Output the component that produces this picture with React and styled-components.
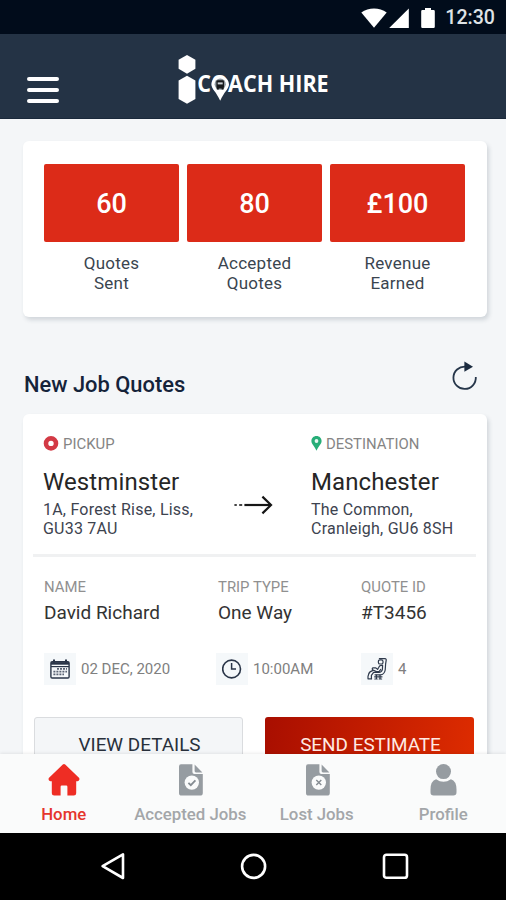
import React from "react";
import styled, { createGlobalStyle } from "styled-components";

const stats = [
  { value: "60", label: ["Quotes", "Sent"] },
  { value: "80", label: ["Accepted", "Quotes"] },
  { value: "£100", label: ["Revenue", "Earned"] },
];

export default function App() {
  return (
    <Screen>
      <GlobalStyle />
      <StatusBar>
        <WifiIcon />
        <SignalIcon />
        <BatteryIcon />
        <Time>12:30</Time>
      </StatusBar>

      <Header>
        <MenuButton aria-label="Menu">
          <MenuLine />
          <MenuLine />
          <MenuLine />
        </MenuButton>
        <Logo />
      </Header>

      <Content>
        <StatsCard>
          {stats.map((stat) => (
            <Stat key={stat.value}>
              <StatTile>{stat.value}</StatTile>
              <StatLabel>
                {stat.label[0]}
                <br />
                {stat.label[1]}
              </StatLabel>
            </Stat>
          ))}
        </StatsCard>

        <SectionHeader>
          <SectionTitle>New Job Quotes</SectionTitle>
          <RefreshIcon />
        </SectionHeader>

        <JobCard>
          <Route>
            <Place>
              <PlaceType>
                <PickupIcon />
                PICKUP
              </PlaceType>
              <PlaceName>Westminster</PlaceName>
              <Address>
                1A, Forest Rise, Liss,
                <br />
                GU33 7AU
              </Address>
            </Place>
            <ArrowIcon />
            <Place>
              <PlaceType>
                <PinIcon />
                DESTINATION
              </PlaceType>
              <PlaceName>Manchester</PlaceName>
              <Address>
                The Common,
                <br />
                Cranleigh, GU6 8SH
              </Address>
            </Place>
          </Route>
          <Divider />
          <Details>
            <Detail>
              <Caption>NAME</Caption>
              <Value>David Richard</Value>
            </Detail>
            <Detail>
              <Caption>TRIP TYPE</Caption>
              <Value>One Way</Value>
            </Detail>
            <Detail>
              <Caption>QUOTE ID</Caption>
              <Value>#T3456</Value>
            </Detail>
            <Meta>
              <IconBox>
                <CalendarIcon />
              </IconBox>
              02 DEC, 2020
            </Meta>
            <Meta $outdent={2}>
              <IconBox>
                <ClockIcon />
              </IconBox>
              10:00AM
            </Meta>
            <Meta>
              <IconBox>
                <SeatIcon />
              </IconBox>
              4
            </Meta>
          </Details>
          <Actions>
            <Button>VIEW DETAILS</Button>
            <Button $primary>SEND ESTIMATE</Button>
          </Actions>
        </JobCard>
      </Content>

      <TabBar>
        <Tab $active>
          <HomeIcon />
          Home
        </Tab>
        <Tab>
          <DocumentIcon mark="M-3.4 0.2 L-1 2.6 L3.6 -2.2" width={1.8} />
          Accepted Jobs
        </Tab>
        <Tab>
          <DocumentIcon mark="M-2.5 -2.5 L2.5 2.5 M2.5 -2.5 L-2.5 2.5" width={1.4} />
          Lost Jobs
        </Tab>
        <Tab>
          <ProfileIcon />
          Profile
        </Tab>
      </TabBar>

      <SystemNav>
        <svg width="28" height="30" viewBox="0 0 28 30">
          <path d="M24 3.4 V27 L3.6 15.2 Z" />
        </svg>
        <svg width="28" height="30" viewBox="0 0 28 30">
          <circle cx="13.6" cy="15.4" r="11.5" />
        </svg>
        <svg width="28" height="30" viewBox="0 0 28 30">
          <rect x="3" y="3.8" width="23" height="23" rx="2.4" />
        </svg>
      </SystemNav>
    </Screen>
  );
}

const WifiIcon = () => (
  <svg width="26" height="20" viewBox="0 0 26 20" fill="#fff">
    <path d="M0.3 4.6 C7.5 -1 18.5 -1 25.7 4.6 L13 19.8 Z" />
  </svg>
);

const SignalIcon = () => (
  <svg width="20" height="20" viewBox="0 0 20 20" fill="#fff">
    <path d="M19.8 0.5 V20 H0.2 Z" />
  </svg>
);

const BatteryIcon = () => (
  <svg width="14" height="20" viewBox="0 0 14 20" fill="#fff">
    <path d="M4 0 H10 V2 H12.6 Q13.8 2 13.8 3.2 V18.8 Q13.8 20 12.6 20 H1.4 Q0.2 20 0.2 18.8 V3.2 Q0.2 2 1.4 2 H4 Z" />
  </svg>
);

const Logo = () => (
  <svg width="180" height="60" viewBox="0 0 180 60" fill="#fff">
    <path d="M9 1 L17.4 5.8 V14.8 L9 19.8 L0.6 14.8 V5.8 Z" />
    <path d="M9 21.8 L17.4 26.4 V45 L9 49.8 L0.6 45 V26.4 Z" />
    <text
      x="19.2"
      y="38.4"
      fontSize="23"
      fontWeight="700"
      fontFamily="'Open Sans', 'Noto Sans', sans-serif"
      textLength="131.5"
      lengthAdjust="spacingAndGlyphs"
    >
      COACH HIRE
    </text>
    <path
      d="M42.2 21.9 C47.2 21.9 51 25.7 51 30.4 C51 34.6 46 37.8 42.2 46.8 C38.4 37.8 33.4 34.6 33.4 30.4 C33.4 25.7 37.2 21.9 42.2 21.9 Z"
    />
    <circle cx="42.2" cy="30.2" r="5.6" fill="#8d969f" />
    <rect x="38.4" y="26.2" width="7.6" height="8.2" rx="1.4" fill="#17191c" />
    <rect x="39.7" y="28.4" width="5" height="2" fill="#c9ced3" />
    <rect x="38.8" y="34" width="2" height="1.6" fill="#17191c" />
    <rect x="43.6" y="34" width="2" height="1.6" fill="#17191c" />
  </svg>
);

const RefreshIcon = () => (
  <svg width="26" height="30" viewBox="0 0 26 30" fill="none">
    <path
      d="M23.8 16 A11.2 11.2 0 1 1 13.4 5.6"
      stroke="#26364a"
      strokeWidth="1.8"
    />
    <path d="M12.4 0.6 L21 5.8 L12.4 10.8 Z" fill="#1c2c40" />
  </svg>
);

const PickupIcon = () => (
  <svg width="16" height="16" viewBox="0 0 16 16">
    <circle cx="8" cy="7.4" r="5" fill="#fff" stroke="#d33a45" strokeWidth="4.6" />
  </svg>
);

const PinIcon = () => (
  <svg width="11" height="16" viewBox="0 0 11 16">
    <path
      d="M5.5 0 C8.5 0 10.6 2.3 10.6 5.1 C10.6 8.2 7.4 10.4 5.5 14.8 C3.6 10.4 0.4 8.2 0.4 5.1 C0.4 2.3 2.5 0 5.5 0 Z"
      fill="#27ae78"
    />
    <circle cx="5.5" cy="5" r="1.9" fill="#e8f8f1" />
  </svg>
);

const ArrowIcon = () => (
  <svg width="40" height="20" viewBox="0 0 40 20" fill="none" stroke="#161616">
    <path d="M0.4 10 H2.8 M5.2 10 H8.2" stroke="#444" strokeWidth="2.2" />
    <path d="M10.4 10 H37" strokeWidth="2.2" />
    <path d="M28.4 1.6 L37 10 L28.4 18.4" strokeWidth="2.2" />
  </svg>
);

const CalendarIcon = () => (
  <svg width="20" height="20" viewBox="0 0 20 20" fill="none" stroke="#2a3548">
    <rect x="0.9" y="2.8" width="18.2" height="16.2" rx="1.2" strokeWidth="1.4" />
    <path d="M1 4.4 H19" strokeWidth="2.6" />
    <path d="M4 0.4 V4 M16 0.4 V4" strokeWidth="2" />
    <path d="M1 7.6 H19" strokeWidth="1.2" />
    <path
      d="M7 9.9 H17 M3.4 12.6 H17 M3.4 15.4 H14"
      stroke="#596273"
      strokeWidth="1.7"
      strokeDasharray="2 1"
    />
  </svg>
);

const ClockIcon = () => (
  <svg width="20" height="20" viewBox="0 0 20 20" fill="none" stroke="#2a3548">
    <circle cx="9.6" cy="10" r="8.9" strokeWidth="1.6" />
    <path d="M9.6 4 V10 H14" strokeWidth="1.5" />
  </svg>
);

// passenger leaning back in a coach seat
const SeatIcon = () => (
  <svg
    width="20"
    height="22"
    viewBox="0 0 20 22"
    fill="none"
    stroke="#2f3a4c"
    strokeWidth="1.2"
    strokeLinejoin="round"
    strokeLinecap="round"
  >
    <rect x="11.4" y="1.8" width="4.6" height="4.2" rx="1.6" />
    <path d="M12.4 0.7 H18 Q19.4 0.7 19.2 2.2 L18.6 6.2 L18.2 12 Q17.4 16.6 13.4 16.8 H8" />
    <path d="M15.6 7.4 L15.4 11.4 Q14.8 14.4 11.8 14.4 H6.6 L4.4 17.4 V20.6" />
    <path d="M15.4 7.4 Q12.6 7 11.8 9.2 L10.6 11.4 L8.6 9.8 H6 Q4.4 11 6 12 L9.4 13.6 H12 L13.8 11.4" />
    <path d="M6.2 12.4 Q2.4 13.4 1.8 15.8 L1 18.4 V20.8 H4.6" />
    <path d="M7.6 18.8 H15 M9.4 17.2 V20.8 M13 17.2 V20.8 M7.8 21 H10.2 M12.2 21 H14.6" />
  </svg>
);

const HomeIcon = () => (
  <svg width="32" height="32" viewBox="0 0 32 32" fill="#ee2d24">
    <path d="M14.8 0.6 Q16 -0.4 17.2 0.6 L31.2 14 Q32.2 16.8 29.6 17.2 H28.2 V29.2 Q28.2 31.6 25.8 31.6 H19.4 V22.8 Q19.4 21.6 18.2 21.6 H13.8 Q12.6 21.6 12.6 22.8 V31.6 H6.2 Q3.8 31.6 3.8 29.2 V17.2 H2.4 Q-0.2 16.8 0.8 14 Z" />
  </svg>
);

const DocumentIcon = ({ mark, width }) => (
  <svg width="26" height="32" viewBox="0 0 26 32" fill="#969ca1">
    <path d="M4 0.2 H15.4 V8 Q15.4 10 17.4 10 H25.8 V29 Q25.8 31.6 23 31.6 H4.6 Q2 31.6 2 29 V2.4 Q2 0.2 4 0.2 Z" />
    <path d="M17.6 0.6 L25.4 8.4 H19 Q17.6 8.4 17.6 7 Z" />
    <g transform="translate(14.8 18.6)">
      <circle r="7.2" fill="#fafbfb" />
      <path d={mark} fill="none" stroke="#858c92" strokeWidth={width} />
    </g>
  </svg>
);

const ProfileIcon = () => (
  <svg width="28" height="32" viewBox="0 0 28 32" fill="#969ca1">
    <circle cx="14.5" cy="7.6" r="7.5" />
    <path d="M7.1 15.2 Q14.5 20.4 21.9 15.2 Q27.5 16.8 27.5 25.6 V28.2 Q27.5 31.4 24.3 31.4 H4.7 Q1.5 31.4 1.5 28.2 V25.6 Q1.5 16.8 7.1 15.2 Z" />
  </svg>
);

const GlobalStyle = createGlobalStyle`
  * {
    box-sizing: border-box;
  }

  body {
    margin: 0;
    font-family: Roboto, sans-serif;
  }

  svg {
    display: block;
    flex-shrink: 0;
  }
`;

const Screen = styled.div`
  display: flex;
  flex-direction: column;
  width: 506px;
  height: 900px;
  overflow: hidden;
  background: #f4f6f8;
`;

const StatusBar = styled.div`
  display: flex;
  align-items: center;
  justify-content: flex-end;
  height: 34px;
  flex-shrink: 0;
  padding: 1px 11px 0 0;
  background: #010c1b;

  svg + svg {
    margin-left: 2px;
  }

  svg:nth-of-type(3) {
    margin-left: 12px;
  }
`;

const Time = styled.div`
  margin-left: 10px;
  font-size: 19.6px;
  font-weight: 500;
  line-height: 34px;
  color: #dfe3e6;
`;

const Header = styled.header`
  display: flex;
  height: 85px;
  flex-shrink: 0;
  padding: 20px 0 0 27px;
  background: #243345;
  border-bottom: 1px solid #1a293b;
`;

const MenuButton = styled.button`
  display: flex;
  flex-direction: column;
  gap: 7px;
  width: 32px;
  margin: 23px 119px 0 0;
  padding: 0;
  border: none;
  background: none;
`;

const MenuLine = styled.span`
  height: 4px;
  border-radius: 2px;
  background: #fff;
`;

const Content = styled.main`
  flex: 1;
  min-height: 0;
  overflow: hidden;
  padding: 22px 19px 0 23px;
`;

const Card = styled.section`
  background: #fff;
  border-radius: 6px;
  box-shadow: 2px 3px 4px rgba(40, 60, 75, 0.17);
`;

const StatsCard = styled(Card)`
  display: grid;
  grid-template-columns: repeat(3, 1fr);
  gap: 8px;
  width: 464px;
  height: 176px;
  padding: 23px 22px 0 21px;
`;

const Stat = styled.div`
  text-align: center;
`;

const StatTile = styled.div`
  height: 78px;
  border-radius: 2px;
  background: #dc2b18;
  color: #fff;
  font-size: 27px;
  font-weight: 500;
  line-height: 80px;
`;

const StatLabel = styled.div`
  margin-top: 11px;
  font-size: 17px;
  line-height: 20px;
  letter-spacing: 0.25px;
  color: #3a454f;
`;

const SectionHeader = styled.div`
  display: flex;
  justify-content: space-between;
  width: 455px;
  height: 97px;
  padding-top: 44px;
`;

const SectionTitle = styled.h2`
  margin: 11px 0 0 1px;
  font-size: 21.9px;
  font-weight: 500;
  line-height: 26px;
  color: #15233a;
`;

const JobCard = styled(Card)`
  width: 464px;
  height: 380px;
  padding: 20px 11px 0;
`;

const Route = styled.div`
  display: flex;
  height: 120px;
  padding-left: 9px;

  > svg {
    margin: 61px 37px 0 0;
  }
`;

const Place = styled.div`
  &:first-child {
    width: 191px;
  }
`;

const PlaceType = styled.div`
  display: flex;
  align-items: center;
  gap: 4px;
  height: 19px;
  font-size: 14.9px;
  color: #858585;
`;

const PlaceName = styled.div`
  margin-top: 15px;
  font-size: 24px;
  line-height: 29px;
  letter-spacing: 0.1px;
  color: #262626;
`;

const Address = styled.div`
  margin-top: 4px;
  font-size: 16px;
  line-height: 18.5px;
  letter-spacing: 0.22px;
  color: #3d434f;
`;

const Divider = styled.div`
  height: 3px;
  margin: 0 0 0 -1px;
  background: #f0f1f2;
`;

const Details = styled.div`
  display: grid;
  grid-template-columns: 174px 143px 1fr;
  padding: 20px 0 0 10px;
`;

const Detail = styled.div`
  height: 76px;
`;

const Caption = styled.div`
  font-size: 14.9px;
  line-height: 20px;
  color: #909090;
`;

const Value = styled.div`
  margin-top: 4px;
  font-size: 19px;
  line-height: 24px;
  color: #333;
`;

const Meta = styled.div`
  display: flex;
  align-items: center;
  gap: 5px;
  height: 32px;
  margin-left: ${(props) => (props.$outdent ? -props.$outdent : 0)}px;
  font-size: 15px;
  color: #808080;
`;

const IconBox = styled.div`
  display: flex;
  align-items: center;
  justify-content: center;
  width: 32px;
  height: 32px;
  background: #f5f8fa;
`;

const Actions = styled.div`
  display: flex;
  gap: 22px;
  margin-top: 32px;
`;

const Button = styled.button`
  width: 209px;
  height: 54px;
  padding: 0 0 0 2px;
  border: 1px solid ${(props) => (props.$primary ? "transparent" : "#dadcdf")};
  border-radius: 3px;
  background: ${(props) =>
    props.$primary
      ? "linear-gradient(100deg, #a80e00, #de2c00) border-box"
      : "#f4f6f8"};
  color: ${(props) => (props.$primary ? "#ffeae4" : "#28303b")};
  font-family: inherit;
  font-size: 18.9px;
`;

const TabBar = styled.nav`
  display: grid;
  grid-template-columns: repeat(4, 1fr);
  height: 79px;
  flex-shrink: 0;
  padding: 10px 0 0;
  background: #fafbfb;
  box-shadow: 0 -1px 3px rgba(0, 0, 0, 0.08);
  z-index: 1;
`;

const Tab = styled.div`
  display: flex;
  flex-direction: column;
  align-items: center;
  gap: 8px;
  padding-left: 1px;
  font-size: 16.8px;
  font-weight: 500;
  line-height: 20px;
  white-space: nowrap;
  color: ${(props) => (props.$active ? "#e5352c" : "#a3a6a9")};
`;

const SystemNav = styled.div`
  display: flex;
  justify-content: center;
  gap: 113px;
  height: 67px;
  flex-shrink: 0;
  padding: 18px 0 0 2px;
  background: #000;

  svg {
    fill: none;
    stroke: #fff;
    stroke-width: 2.6;
    stroke-linejoin: round;
  }
`;
